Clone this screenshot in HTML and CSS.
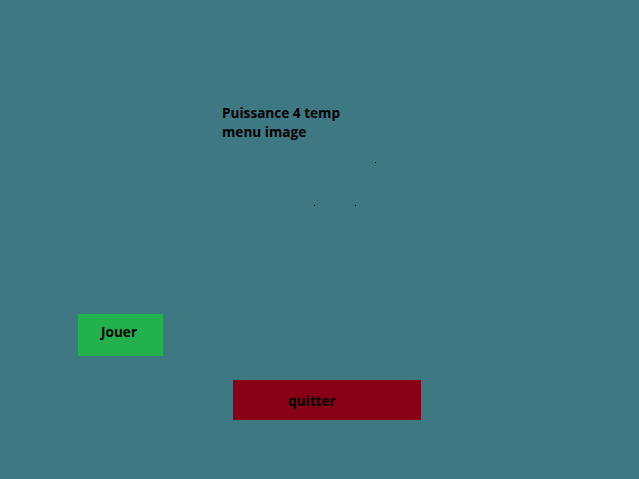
FILE: index.html
```html
<!DOCTYPE html>
<html lang="fr">
<head>
    <meta charset="UTF-8">
    <title>Puissance 4</title>
    <link rel="stylesheet" href="styles.css">
</head>
<body>
    <div class="menu">
        <div class="title">Puissance 4 temp<br>menu image</div>
        <svg class="dots" width="640" height="60" viewBox="0 0 640 60">
            <rect x="375" y="20" width="1" height="1" fill="#000"/>
            <rect x="314" y="63" width="1" height="1" fill="#000"/>
            <rect x="355" y="63" width="1" height="1" fill="#000"/>
        </svg>
        <button class="btn btn-play">Jouer</button>
        <button class="btn btn-quit">quitter</button>
    </div>
</body>
</html>
```
FILE: styles.css
```css
body {
    margin: 0;
    padding: 0;
    background-color: #3e7882;
    font-family: "Open Sans", "DejaVu Sans", sans-serif;
}
.menu {
    width: 639px;
    height: 479px;
    overflow: hidden;
}
.title {
    margin: 103px 0 0 222px;
    font-size: 13.6px;
    font-weight: bold;
    line-height: 19px;
    color: #000;
}
.dots {
    display: block;
    margin-top: 1px;
    overflow: visible;
}
.btn {
    display: block;
    border: none;
    border-radius: 0;
    padding: 0;
    font-family: inherit;
    font-size: 13.6px;
    font-weight: bold;
    color: #000;
    text-align: left;
    cursor: pointer;
}
.btn-play {
    margin: 112px 0 0 78px;
    width: 85px;
    height: 42px;
    padding: 0 0 8px 23px;
    background-color: #22b14c;
}
.btn-quit {
    margin: 24px 0 0 233px;
    width: 188px;
    height: 40px;
    padding: 0 0 0 55px;
    background-color: #880015;
}
```
